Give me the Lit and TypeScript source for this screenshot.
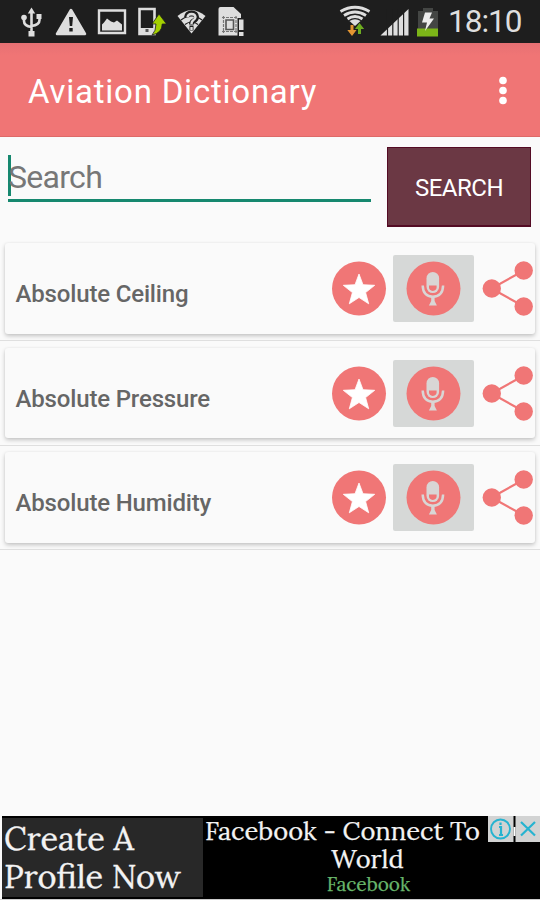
import { LitElement, html, css } from "lit";
import { customElement, property } from "lit/decorators.js";

@customElement("status-bar")
class StatusBar extends LitElement {
  static styles = css`
    :host { display: flex; height: 43px; background: #1e1e1e; color: #dedede; justify-content: space-between; }
    .group { display: flex; height: 43px; }
    .left { padding-left: 20px; gap: 10px; }
    .right { padding-right: 18px; gap: 7px; }
    svg { display: block; height: 43px; flex: none; }
    .wifi { margin-right: 2px; }
    .time { font: 31.5px/43px Roboto, sans-serif; width: 74px; letter-spacing: -1px; white-space: nowrap; }
  `;
  render() {
    return html`
      <div class="group left">
        <svg width="24" viewBox="20 0 24 43" fill="none" stroke="#dedede" stroke-width="2.6">
          <path d="M31.5 12V32M24 18v3q0 5 7.5 6M39.500 17v3q0 5-8 6" />
          <path d="M27.800 13.500L31.500 7.500l3.700 6z" fill="#dedede" stroke="none" />
          <circle cx="24" cy="17.500" r="2.800" fill="#dedede" stroke="none" />
          <path d="M36.500 14h5v5h-5zM28.500 31h6v5.500h-6z" fill="#dedede" stroke="none" />
        </svg>
        <svg width="33" viewBox="54 0 33 43">
          <path d="M71 10L85 34H57z" fill="#dedede" stroke="#dedede" stroke-width="2.500" stroke-linejoin="round" />
          <path d="M69 17h4l-.8 9h-2.400zM69.300 28h3.400v3.400h-3.400z" fill="#1e1e1e" />
        </svg>
        <svg width="30" viewBox="97 0 30 43">
          <path d="M99 10.500h26V33H99z" fill="none" stroke="#dedede" stroke-width="2.400" />
          <path d="M102 30.500v-6l2-2 3-4 4 3 3 1 3-2 5 4v6z" fill="#dedede" />
        </svg>
        <svg width="29" viewBox="137 0 29 43">
          <path d="M139.500 9h15v25h-15z" fill="none" stroke="#dedede" stroke-width="2.600" />
          <path d="M139 28h16v6h-16z" fill="#dedede" /><path d="M145.500 29h3v3h-3z" fill="#555" />
          <path d="M159 14l7.500 10h-4.300q0 9-10.200 11 4-4 4-11h-4z" fill="#a4d000" stroke="#1e1e1e" stroke-width=".8" />
        </svg>
        <svg width="31" viewBox="177 0 31 43">
          <path d="M178.500 16q14-11.500 28 0L192.500 33.500z" fill="#dedede" />
          <path d="M182 20q10.500-8 21 0M186 24.500q6.500-5 13 0" fill="none" stroke="#1e1e1e" stroke-width="1.200" />
          <path d="M187.500 17.500q.5-4.500 5-4.500t5 4q0 2.500-3 4-2 1-2 3.500M190.500 28h4" fill="none" stroke="#1e1e1e" stroke-width="5" />
          <path d="M188.500 17.500q.5-3.500 4-3.500t4 3q0 2-2.500 3.500-1.500 1-1.500 3.500M192.500 27v3" fill="none" stroke="#dedede" stroke-width="2.400" />
        </svg>
        <svg width="29" viewBox="219 0 29 43">
          <path d="M220.500 9q0-2 2-2h13l7.500 7v21.500h-22.500z" fill="#dedede" />
          <path d="M224 17.500h15M224 31.500h15M225.500 16v17M238 16v17" stroke="#777" stroke-width="1.200" stroke-dasharray="3 1" />
          <path d="M228 20h7.500v9.500h-7.500z" fill="none" stroke="#555" stroke-width="1.600" />
          <path d="M239.500 18h8v19h-8z" fill="#1e1e1e" /><path d="M241 19.500h4.500V30H241zM241 32h4.500v4H241z" fill="#dedede" />
        </svg>
      </div>
      <div class="group right">
        <svg class="wifi" width="32" viewBox="339 0 32 43">
          <g fill="none" stroke="#dedede" stroke-width="2.800">
            <path d="M340.500 11.500q14.500-8.500 29 0M344 15.500q11-7 22 0M347.500 19q7.500-5 15 0" />
          </g>
          <path d="M349.500 21q5.500-3.500 11 0l-5.500 5z" fill="#dedede" />
          <path d="M350.500 25h3v5h3L352 36l-4.700-6h3.200z" fill="#e49532" />
          <path d="M358 34h3v-5h3.200l-4.700-6-4.500 6h3z" fill="#6eac20" />
        </svg>
        <svg width="29" viewBox="381 0 29 43">
          <path d="M381.500 35.500L409.500 9v26.500z" fill="#dedede" />
          <path d="M388.500 9v27M393.800 9v27M399.200 9v27M404.600 9v27" stroke="#1e1e1e" stroke-width="1.200" />
        </svg>
        <svg width="25" viewBox="416 0 25 43">
          <path d="M418 11h5V8h10v3h5v18h-20z" fill="#444644" />
          <path d="M417 28.500h21V36.500h-21z" fill="#7cb518" />
          <path d="M425 12.500h7l-2.500 6h4.500l-9 12.500 2-8.500h-5z" fill="#eee" />
        </svg>
        <div class="time">18:10</div>
      </div>
    `;
  }
}

@customElement("word-row")
class WordRow extends LitElement {
  @property() word = "";
  static styles = css`
    :host { display: block; height: 104.6px; box-sizing: border-box; padding: 6.500px 5px 0; border-bottom: 1px solid #dfdfdf; }
    .card { display: flex; height: 90.500px; border-radius: 3px; background: #fafafa; box-shadow: 0 2px 4px rgba(0,0,0,.22), 0 0 2px rgba(0,0,0,.05); }
    .word { flex: 1; padding: 7px 0 0 10.500px; font: 500 24px/88px Roboto, sans-serif; letter-spacing: -.16px; color: #666; white-space: nowrap; }
    .actions { display: flex; padding-top: 12px; height: 67px; }
    .mic { background: #d6d8d7; border-radius: 2px; width: 81px; margin: 0 7px 0 6px; }
    svg { display: block; }
  `;
  render() {
    return html`<div class="card">
      <div class="word">${this.word}</div>
      <div class="actions">
        <svg width="55" height="67" viewBox="332 255 55 67">
          <circle cx="359" cy="288.500" r="27" fill="#f07676" />
          <path d="M359 274l4 10.700 11.700.600-9.100 7.300 3.100 11.200-9.700-6.300-9.700 6.300 3.100-11.200-9.100-7.300 11.700-.600z" fill="#fff" stroke="#fff" stroke-width=".8" stroke-linejoin="round" />
        </svg>
        <div class="mic">
          <svg width="81" height="67" viewBox="393 255 81 67">
            <circle cx="433.500" cy="288.500" r="27" fill="#f07676" />
            <rect x="426.500" y="272" width="12.600" height="21" rx="6.300" fill="#d9d6d5" />
            <path d="M429 285.500h7.600v2q0 2.800-3.800 3.500-3.800-.7-3.800-3.500z" fill="#f07676" />
            <path d="M422.700 285.500q.2 10.800 10.200 11.300 10-.5 10.200-11.300" fill="none" stroke="#d9d6d5" stroke-width="2.500" />
            <path d="M431.200 297h3.400v4l2.300 4.500h-8l2.300-4.500z" fill="#d9d6d5" />
          </svg>
        </div>
        <svg width="54" height="67" viewBox="481 255 54 67">
          <path d="M524 270.500L491.500 288.500 524 306.500" fill="none" stroke="#f07676" stroke-width="2.200" />
          <g fill="#f07676"><circle cx="491.800" cy="288.500" r="9.200" /><circle cx="523.700" cy="270.500" r="9.200" /><circle cx="523.700" cy="306.500" r="9.200" /></g>
        </svg>
      </div>
    </div>`;
  }
}

@customElement("app-root")
class AppRoot extends LitElement {
  static styles = css`
    :host { display: flex; flex-direction: column; width: 540px; height: 900px; overflow: hidden; background: #fafafa; font-family: Roboto, sans-serif; }
    .bar { height: 94px; box-sizing: border-box; display: flex; justify-content: space-between; padding: 2px 32px 0 28px; color: #fff; background: linear-gradient(#e67073, #f07575 12px); border-bottom: 1px solid #dd6a68; }
    .title { font-size: 33px; line-height: 94px; letter-spacing: .77px; white-space: nowrap; }
    .bar svg { display: block; }
    .search { display: flex; height: 99.500px; padding: 10px 9px 0 8px; box-sizing: border-box; }
    .field { width: 363px; height: 55px; border-bottom: 3px solid #16886f; box-sizing: border-box; display: flex; align-items: flex-start; }
    .caret { width: 3px; height: 41px; margin-top: 8px; background: #16886f; }
    .hint { margin-left: -3px; font-size: 32px; line-height: 60px; letter-spacing: -.7px; color: #777; }
    .button { margin-left: auto; width: 144px; height: 80px; box-sizing: border-box; background: #6b3844; border: 1px solid #530b24; border-bottom-width: 2px; color: #fff; font-size: 24px; line-height: 80px; letter-spacing: -.5px; text-align: center; white-space: nowrap; }
    .ad { margin-top: auto; height: 84px; display: flex; padding: 0 0 0 2px; position: relative; color: #f3f3f3; font-family: Lora, "Liberation Serif", serif; border-bottom: 1px solid #ccc; box-sizing: border-box; }
    .pitch { width: 201px; box-sizing: border-box; background: #282828; border: solid #000; border-width: 2px 0; padding: 2px 0 0 2px; font-size: 32.500px; line-height: 37.500px; white-space: nowrap; -webkit-text-stroke: .3px; }
    .copy { flex: 1; background: #000; text-align: center; font-size: 25.500px; line-height: 28px; white-space: nowrap; -webkit-text-stroke: .25px; }
    .head { display: flex; padding: 1px 0 0 2px; }
    .world { padding-right: 8px; }
    .brand { font-size: 19px; line-height: 22px; color: #68b66b; padding-right: 6px; }
    .choices { position: absolute; right: 0; top: 0; display: block; }
  `;
  render() {
    return html`
      <status-bar></status-bar>
      <div class="bar">
        <div class="title">Aviation Dictionary</div>
        <svg width="10" height="91" viewBox="0 0 10 91" fill="#fff"><circle cx="5" cy="35.500" r="3.800" /><circle cx="5" cy="45.500" r="3.800" /><circle cx="5" cy="55.500" r="3.800" /></svg>
      </div>
      <div class="search">
        <div class="field"><div class="caret"></div><div class="hint">Search</div></div>
        <div class="button">SEARCH</div>
      </div>
      ${["Absolute Ceiling", "Absolute Pressure", "Absolute Humidity"].map((w) => html`<word-row .word=${w}></word-row>`)}
      <div class="ad">
        <div class="pitch"><div>Create A</div><div>Profile Now</div></div>
        <div class="copy">
          <div class="head">Facebook - Connect To</div>
          <div class="world">World</div>
          <div class="brand">Facebook</div>
        </div>
        <svg class="choices" width="53" height="27" viewBox="487 816 53 27">
          <path d="M488 816h25.500v26H488zM515.500 816H540v26h-24.500z" fill="#d2d3d3" />
          <path d="M513.500 827h2v9h-2z" fill="#fff" />
          <circle cx="500.500" cy="829" r="9.500" fill="none" stroke="#26b3d0" stroke-width="1.900" />
          <path d="M499 827h2v8M499 835h4M500.500 822.500v2.500M521 822l14 13.500M535 822l-14 13.500" fill="none" stroke="#26b3d0" stroke-width="2.200" />
        </svg>
      </div>
    `;
  }
}
